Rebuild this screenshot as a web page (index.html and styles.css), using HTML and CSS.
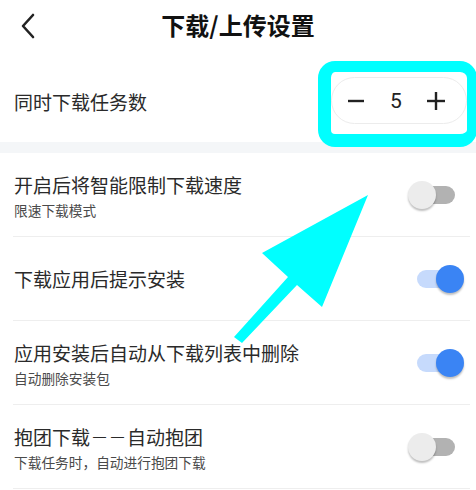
FILE: index.html
```html
<!DOCTYPE html>
<html lang="zh-CN">
<head>
<meta charset="utf-8">
<title>下载/上传设置</title>
<link rel="stylesheet" href="styles.css">
</head>
<body>
<div class="page">
  <header class="topbar">
    <span class="back">
      <svg width="16" height="26" viewBox="0 0 16 26"><polyline points="13,2 3,13 13,24" fill="none" stroke="#222" stroke-width="2.6" stroke-linecap="round" stroke-linejoin="round"/></svg>
    </span>
    <h1 class="title">下载/上传设置</h1>
    <span></span>
  </header>

  <section class="row row-first">
    <div class="label">同时下载任务数</div>
    <div class="stepper-wrap">
      <div class="stepper">
        <span class="step-btn">
          <svg width="18" height="18" viewBox="0 0 18 18"><line x1="1" y1="9" x2="17" y2="9" stroke="#222" stroke-width="2.4"/></svg>
        </span>
        <span class="step-val">5</span>
        <span class="step-btn">
          <svg width="20" height="20" viewBox="0 0 20 20"><line x1="1" y1="10" x2="19" y2="10" stroke="#222" stroke-width="2.4"/><line x1="10" y1="1" x2="10" y2="19" stroke="#222" stroke-width="2.4"/></svg>
        </span>
      </div>
      <div class="highlight"></div>
    </div>
  </section>

  <div class="band"></div>

  <section class="row item">
    <div class="texts">
      <div class="label">开启后将智能限制下载速度</div>
      <div class="sub">限速下载模式</div>
    </div>
    <span class="toggle"><span class="track"></span><span class="thumb"></span></span>
  </section>
  <div class="divider"></div>

  <section class="row item">
    <div class="texts">
      <div class="label">下载应用后提示安装</div>
    </div>
    <span class="toggle on"><span class="track"></span><span class="thumb"></span></span>
  </section>
  <div class="divider"></div>

  <section class="row item">
    <div class="texts">
      <div class="label">应用安装后自动从下载列表中删除</div>
      <div class="sub">自动删除安装包</div>
    </div>
    <span class="toggle on"><span class="track"></span><span class="thumb"></span></span>
  </section>
  <div class="divider"></div>

  <section class="row item">
    <div class="texts">
      <div class="label">抱团下载<span class="dash">——</span>自动抱团</div>
      <div class="sub">下载任务时，自动进行抱团下载</div>
    </div>
    <span class="toggle"><span class="track"></span><span class="thumb"></span></span>
  </section>
  <div class="divider"></div>

  <svg class="arrow" width="476" height="490" viewBox="0 0 476 490">
    <polygon points="368,195 262,253 288,277 234,337 242,343 297,285 322,307" fill="#00ffff"/>
  </svg>
</div>
</body>
</html>
```
FILE: styles.css
```css
* { box-sizing: border-box; }
html, body { margin: 0; padding: 0; background: #fff; }
body {
  font-family: "Noto Sans CJK SC", "Noto Sans", sans-serif;
  color: #222;
}
.page {
  position: relative;
  width: 476px;
  height: 490px;
  overflow: hidden;
}
.topbar {
  height: 56px;
  display: grid;
  grid-template-columns: 60px 1fr 60px;
  align-items: center;
}
.back {
  display: flex;
  padding-left: 20px;
  padding-bottom: 4px;
}
.title {
  margin: 0;
  text-align: center;
  font-size: 24px;
  line-height: 30px;
  font-weight: 700;
  color: #111;
  padding-bottom: 6px;
}
.row {
  display: flex;
  align-items: center;
  justify-content: space-between;
  padding-left: 14px;
}
.row-first {
  height: 86px;
  padding-right: 9px;
}
.label {
  font-size: 19px;
  line-height: 26px;
  color: #2a2a2a;
  white-space: nowrap;
}
.dash {
  font-family: "Liberation Sans", sans-serif;
  font-size: 13px;
  letter-spacing: 5px;
  margin-left: 3px;
  margin-right: -2px;
  vertical-align: 4px;
}
.row-first .label { padding-top: 5px; }
.stepper-wrap {
  position: relative;
  margin-top: 3px;
}
.stepper {
  width: 136px;
  height: 47px;
  border: 1px solid #ececec;
  border-radius: 24px;
  display: grid;
  grid-template-columns: 40px 40px 40px;
  padding: 0 12px 0 4px;
  align-items: center;
  justify-items: center;
}
.step-btn { display: flex; }
.step-val {
  font-family: Roboto, "Liberation Sans", sans-serif;
  font-size: 21px;
  line-height: 24px;
  color: #222;
}
.highlight {
  position: absolute;
  left: -13px;
  top: -16px;
  right: -10px;
  bottom: -23px;
  border-style: solid;
  border-color: #00ffff;
  border-width: 11px 10px 13px 13px;
  border-radius: 17px;
}
.band {
  height: 11px;
  background: #f4f6f8;
}
.item {
  height: 83px;
  padding-right: 12px;
}
.texts {
  display: flex;
  flex-direction: column;
  gap: 3px;
  padding-top: 1px;
}
.sub {
  font-size: 13.7px;
  line-height: 18px;
  color: #4a4a4a;
  white-space: nowrap;
}
.divider {
  height: 1px;
  background: #eeeeee;
  margin: 0 6px 0 13px;
}
.toggle {
  position: relative;
  width: 56px;
  height: 28px;
  flex: none;
}
.track {
  position: absolute;
  left: 9px;
  top: 5px;
  width: 38px;
  height: 18px;
  border-radius: 9px;
  background: #b2b2b2;
}
.thumb {
  position: absolute;
  left: 0;
  top: 0;
  width: 28px;
  height: 28px;
  border-radius: 50%;
  background: #ececec;
  box-shadow: 0 2px 2px rgba(0,0,0,0.25);
}
.toggle.on .track { background: #c6dafc; }
.toggle.on .thumb {
  left: 28px;
  background: #3a84f4;
}
.arrow {
  position: absolute;
  left: 0;
  top: 0;
  pointer-events: none;
}
```
